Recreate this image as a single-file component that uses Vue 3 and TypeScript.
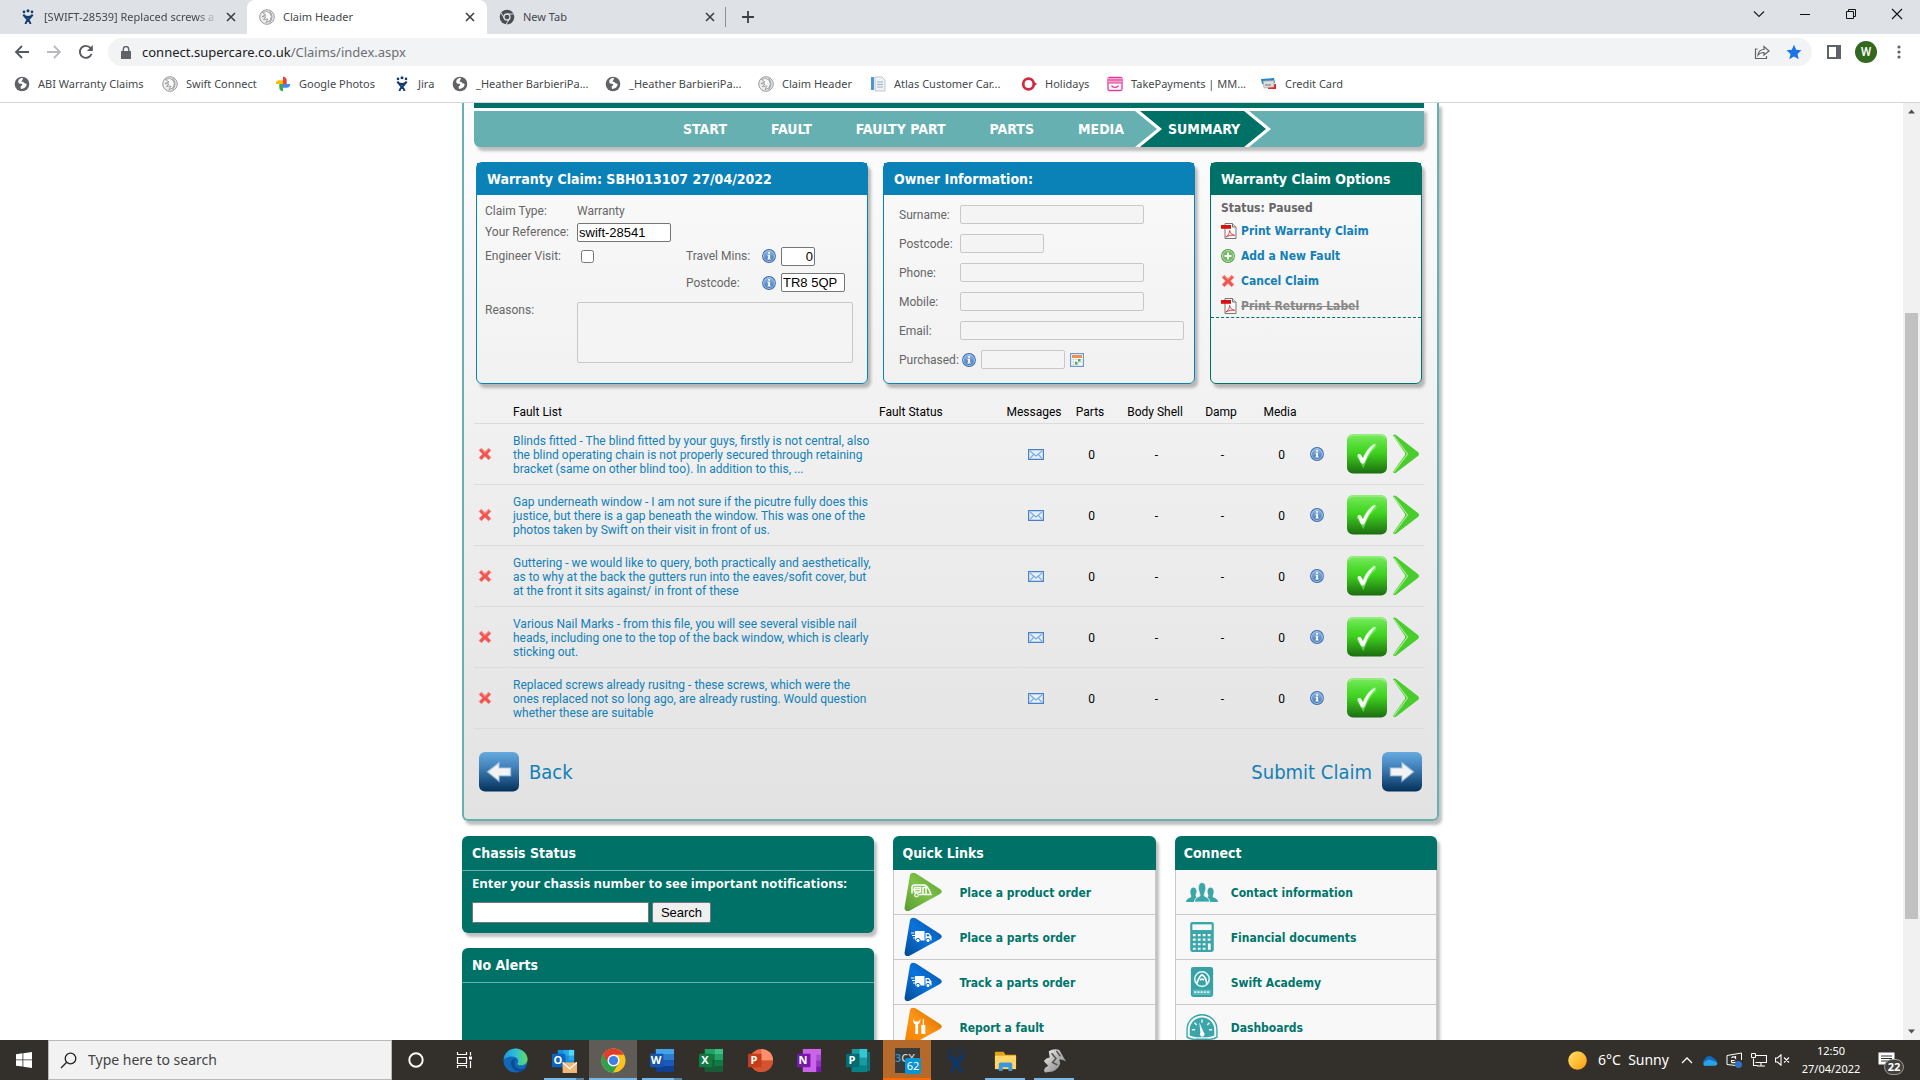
<script setup lang="ts">
interface Bookmark { label: string; icon: string }
interface Fault { id: number; text: string }
interface QuickLink { label: string; icon: string }
interface TaskApp { name: string; icon: string; state: string; letter?: string; badge?: string }

const bookmarks: Bookmark[] = [
  { label: 'ABI Warranty Claims', icon: 'globe' },
  { label: 'Swift Connect', icon: 'swift' },
  { label: 'Google Photos', icon: 'photos' },
  { label: 'Jira', icon: 'jira' },
  { label: '_Heather BarbieriPa...', icon: 'globe' },
  { label: '_Heather BarbieriPa...', icon: 'globe' },
  { label: 'Claim Header', icon: 'swift' },
  { label: 'Atlas Customer Car...', icon: 'atlas' },
  { label: 'Holidays', icon: 'holidays' },
  { label: 'TakePayments | MM...', icon: 'takepay' },
  { label: 'Credit Card', icon: 'card' },
]

const steps = ['START', 'FAULT', 'FAULTY PART', 'PARTS', 'MEDIA', 'SUMMARY']

const faults: Fault[] = [
  { id: 1, text: 'Blinds fitted - The blind fitted by your guys, firstly is not central, also\nthe blind operating chain is not properly secured through retaining\nbracket (same on other blind too). In addition to this, ...' },
  { id: 2, text: 'Gap underneath window - I am not sure if the picutre fully does this\njustice, but there is a gap beneath the window. This was one of the\nphotos taken by Swift on their visit in front of us.' },
  { id: 3, text: 'Guttering - we would like to query, both practically and aesthetically,\nas to why at the back the gutters run into the eaves/sofit cover, but\nat the front it sits against/ in front of these' },
  { id: 4, text: 'Various Nail Marks - from this file, you will see several visible nail\nheads, including one to the top of the back window, which is clearly\nsticking out.' },
  { id: 5, text: 'Replaced screws already rusitng - these screws, which were the\nones replaced not so long ago, are already rusting. Would question\nwhether these are suitable' },
]

const owner = [
  { id: 'surname', label: 'Surname:', size: 'medium' },
  { id: 'owner-postcode', label: 'Postcode:', size: 'short' },
  { id: 'phone', label: 'Phone:', size: 'medium' },
  { id: 'mobile', label: 'Mobile:', size: 'medium' },
  { id: 'email', label: 'Email:', size: 'long' },
]

const quickLinks: QuickLink[] = [
  { label: 'Place a product order', icon: 'caravan' },
  { label: 'Place a parts order', icon: 'truck' },
  { label: 'Track a parts order', icon: 'truck' },
  { label: 'Report a fault', icon: 'tools' },
]
const connectLinks: QuickLink[] = [
  { label: 'Contact information', icon: 'people' },
  { label: 'Financial documents', icon: 'calc' },
  { label: 'Swift Academy', icon: 'academy' },
  { label: 'Dashboards', icon: 'gauge' },
]

const apps: TaskApp[] = [
  { name: 'Edge', icon: 'edge', state: '' },
  { name: 'Outlook', icon: 'outlook', state: 'stacked', letter: 'O' },
  { name: 'Chrome', icon: 'chrome', state: 'active' },
  { name: 'Word', icon: 'word', state: 'stacked', letter: 'W' },
  { name: 'Excel', icon: 'excel', state: '', letter: 'X' },
  { name: 'PowerPoint', icon: 'ppt', state: '', letter: 'P' },
  { name: 'OneNote', icon: 'onenote', state: '', letter: 'N' },
  { name: 'Publisher', icon: 'publisher', state: '', letter: 'P' },
  { name: '3CX', icon: 'cx', state: 'alert', badge: '62' },
  { name: 'Jira', icon: 'jira-lg', state: '' },
  { name: 'File Explorer', icon: 'explorer', state: 'open' },
  { name: 'Swift', icon: 'bird', state: 'open' },
]
</script>

<template>
  <div class="screen">
    <svg class="defs" width="0" height="0" aria-hidden="true">
      <defs>
        <linearGradient id="gGreen" x1="0" y1="0" x2="0" y2="1">
          <stop offset="0" stop-color="#7dea62" /><stop offset=".3" stop-color="#4fdc31" /><stop offset=".48" stop-color="#3fd11f" /><stop offset="1" stop-color="#1c6d10" />
        </linearGradient>
        <linearGradient id="gBlue" x1="0" y1="0" x2="0" y2="1">
          <stop offset="0" stop-color="#66aae0" /><stop offset=".4" stop-color="#3f80b8" /><stop offset="1" stop-color="#04305a" />
        </linearGradient>
        <linearGradient id="gInfo" x1="0" y1="0" x2="0" y2="1">
          <stop offset="0" stop-color="#8fb8e4" /><stop offset="1" stop-color="#4577b4" />
        </linearGradient>
        <linearGradient id="gTriG" x1="0" y1="1" x2="1" y2="0">
          <stop offset="0" stop-color="#5a9a32" /><stop offset=".5" stop-color="#7dc247" /><stop offset="1" stop-color="#5f9e35" />
        </linearGradient>
        <linearGradient id="gTriB" x1="0" y1="1" x2="1" y2="0">
          <stop offset="0" stop-color="#034a94" /><stop offset=".5" stop-color="#0a74dc" /><stop offset="1" stop-color="#034f9f" />
        </linearGradient>
        <linearGradient id="gTriO" x1="0" y1="1" x2="1" y2="0">
          <stop offset="0" stop-color="#f08000" /><stop offset=".5" stop-color="#ff9414" /><stop offset="1" stop-color="#c66a00" />
        </linearGradient>
        <linearGradient id="gSun" x1="0" y1="0" x2="1" y2="1">
          <stop offset="0" stop-color="#ffe36a" /><stop offset="1" stop-color="#ff9a0a" />
        </linearGradient>
        <linearGradient id="gEdge" x1="0" y1="0" x2="1" y2="0">
          <stop offset="0" stop-color="#2196dc" /><stop offset=".5" stop-color="#2ec0d8" /><stop offset="1" stop-color="#62dc5c" />
        </linearGradient>
        <linearGradient id="gMetal" x1="0" y1="0" x2="1" y2="1">
          <stop offset="0" stop-color="#f4f4f4" /><stop offset=".5" stop-color="#b4b4b4" /><stop offset="1" stop-color="#7c7c7c" />
        </linearGradient>
      </defs>

      <symbol id="i-globe" viewBox="0 0 16 16"><circle cx="8" cy="8" r="7.300" fill="#5f6368" /><path d="M8.500 1.800C6 2.200 4.400 3.600 4.200 5.400c-.1 1.600 1 2.300 2.900 2.300 1.600 0 1.400 1.600.4 2-1.200.5-.9 1.900-.4 3.200 2.800-.1 5.100-1.700 5.500-4.100.2-1.200-1-1.400-1.800-1.600-1.100-.2-.8-1.500-2.100-1.500-1.100.1-1.500-.6-.7-1.300.9-.8 1.200-1.700.5-2.600z" fill="#fff" /></symbol>
      <symbol id="i-swift" viewBox="0 0 16 16"><circle cx="8" cy="8" r="7.300" fill="#ececec" stroke="#999" /><path d="M3.500 3.500Q8 1 11 4l1.500 3.500L11 12l-4 1.500 2-3.500-4.500.5 2.500-2.500-4-.5 4-1.500z" fill="#fafafa" stroke="#8f8f8f" stroke-width=".8" /><path d="M10.500 2.500q4.500 5 0 11" fill="none" stroke="#aaa" stroke-width="1.500" /></symbol>
      <symbol id="i-photos" viewBox="0 0 16 16"><path d="M8 8V.8a3.700 3.700 0 0 1 3.700 3.700V8z" fill="#ea4335" /><path d="M8 8h7.200a3.700 3.700 0 0 1-3.700 3.700H8z" fill="#4285f4" /><path d="M8 8v7.200a3.700 3.700 0 0 1-3.700-3.700V8z" fill="#34a853" /><path d="M8 8H.8a3.700 3.700 0 0 1 3.700-3.700H8z" fill="#fbbc04" /></symbol>
      <symbol id="i-jira" viewBox="0 0 16 16"><g fill="#123c6e"><circle cx="8" cy="1.800" r="1.500" /><circle cx="4" cy="2.900" r="1.300" /><circle cx="12" cy="2.900" r="1.300" /></g><path d="M3.500 5.500C4 7.500 6.500 8 8 8s4-.5 4.500-2.500M5 7.500c.5 2.500 5.500 3.500 5.500 7.500M11 7.500c-.5 2.500-5.500 3.500-5.500 7.500" fill="none" stroke="#123c6e" stroke-width="2" /></symbol>
      <symbol id="i-jira-lg" viewBox="0 0 16 16"><g fill="#0b3769"><circle cx="8" cy="1.500" r="1.200" /><circle cx="4" cy="2.400" r="1.200" /><circle cx="12" cy="2.400" r="1.200" /></g><path d="M3.400 4.500C4 6.800 6.500 7.300 8 7.300S12 6.800 12.600 4.500M5 7c.5 3 5.900 4 5.900 8.700M11 7c-.5 3-5.900 4-5.900 8.700" fill="none" stroke="#0b3769" stroke-width="2" /></symbol>
      <symbol id="i-atlas" viewBox="0 0 16 16"><path d="M1 1h3v13H1z" fill="#4b97cf" /><path d="M5 1h7l3 3v11H5z" fill="#eef2f5" stroke="#b4bcc4" stroke-width=".8" /><path d="M7 6h6M7 8.500h6M7 11h6" stroke="#9fb2c4" /></symbol>
      <symbol id="i-holidays" viewBox="0 0 16 16"><circle cx="7.500" cy="8" r="5.300" fill="none" stroke="#d02c3f" stroke-width="2.800" /><path d="M12 5l4 3-4 3z" fill="#d02c3f" /></symbol>
      <symbol id="i-takepay" viewBox="0 0 16 16"><rect x="1" y="1.500" width="14" height="13" rx="1.500" fill="#fff" stroke="#e13b96" stroke-width="1.300" /><path d="M1 2h14v5H1z" fill="#f4a3cd" /><path d="M1 4h14M1 7h14" stroke="#e13b96" /><path d="M4.500 9.500c1 2.500 6 2.500 7 0" fill="none" stroke="#e13b96" stroke-width="1.300" /></symbol>
      <symbol id="i-card" viewBox="0 0 16 16"><path d="M0 3l13-1 1 5-13 1z" fill="#2288c8" /><path d="M7 8h8v5H7z" fill="#e02a2a" /><path d="M2 5l11-.5V11L3 12z" fill="#dcdcdc" stroke="#999" stroke-width=".6" /><path d="M4 9h6" stroke="#777" /></symbol>

      <symbol id="i-info" viewBox="0 0 16 16"><circle cx="8" cy="8" r="7.900" fill="#3a6aae" /><circle cx="8" cy="8" r="6.300" fill="url(#gInfo)" stroke="#b8d2ee" stroke-width=".9" /><path d="M7.100 3.500h2v1.800h-2zM6.300 6.500h2.800v4.300h.9v1.300H6.200v-1.300h.9V7.700h-.8z" fill="#fff" /></symbol>
      <symbol id="i-cross" viewBox="0 0 16 16"><path d="M3.900 1.300 8 5.300l4.100-4 2.600 2.600L10.700 8l4 4.100-2.600 2.600-4.100-4-4.100 4-2.600-2.600 4-4.100-4-4.100z" fill="#f4524f" stroke="#e8746f" stroke-width=".6" /><path d="M3.900 2.200 8 6.300l4.100-4.100" fill="none" stroke="#ff9a96" stroke-width="1.100" /></symbol>
      <symbol id="i-pdf" viewBox="0 0 16 16"><path d="M4 .5h7.500l3.500 3.500v11.500H4z" fill="#fafafa" stroke="#777" /><path d="M11.500.5V4H15" fill="#ddd" stroke="#777" /><path d="M0 2h10v3.800H0z" fill="#d81010" /><path d="M4.800 14c2.300-1.200 3.700-4 3.900-6.500.4 3 2.500 4.500 5 4.800-2.800-.4-6 .2-8.900 1.700z" fill="none" stroke="#d83030" stroke-width=".9" /></symbol>
      <symbol id="i-plus" viewBox="0 0 16 16"><circle cx="8" cy="8" r="7.900" fill="#4e9e44" /><circle cx="8" cy="8" r="6.300" fill="#6db95f" stroke="#c6e8bd" /><path d="M6.900 4h2.200v2.900H12v2.200H9.100V12H6.900V9.100H4V6.900h2.900z" fill="#fff" /></symbol>
      <symbol id="i-mail" viewBox="0 0 16 11"><path d="M.6.600h14.800v9.800H.6z" fill="#e4f0fc" stroke="#4a80c4" stroke-width="1.200" /><path d="M2 2l6 5 6-5M2 9.300l3.600-3.800M14 9.300l-3.600-3.800" fill="none" stroke="#7da9dc" stroke-width="1.100" /></symbol>
      <symbol id="i-cal" viewBox="0 0 14 14"><path d="M.6.600h12.800v12.800H.6z" fill="#fff" stroke="#6b9ad0" stroke-width="1.200" /><path d="M2 2h10v3H2z" fill="#f0904a" /><path d="M2.500 6.500h9M2.500 9h9M2.500 11.500h6" stroke="#b8cce0" stroke-width="1.500" stroke-dasharray="1.600 1" /><path d="M8 6h2.500v2.500H8zM5 9h2.500v2.500H5z" fill="#55ac44" /></symbol>
      <symbol id="i-check" viewBox="0 0 40 40"><rect width="40" height="39.500" rx="6" fill="url(#gGreen)" /><path d="M2 4Q3 1 7 1h26q4 0 5 3" fill="none" stroke="#b3f5a2" stroke-width=".8" /><path d="M12.500 22.500l3.500 6C18.500 22 22 16 27 12" fill="none" stroke="#8dff7a" stroke-opacity=".5" stroke-width="5" stroke-linecap="round" /><path d="M10.600 21q2-2.200 3.500 0l1.800 3.500Q19.500 15.500 26 11q2-1.200 2.500-.3-7 7-10.500 17-1.600 3.400-4.200.8z" fill="#fff" /></symbol>
      <symbol id="i-next" viewBox="0 0 28 40"><path d="M1 1.500Q2 0 4 1l22.500 17.500q1 1.500 0 3L4 38.800q-2.500 1-3-1L13 21v-2z" fill="#4bcc2e" /><path d="M2 2l13.500 18L2 38" fill="none" stroke="#a5f090" stroke-width="1.200" /></symbol>
      <symbol id="i-left" viewBox="0 0 40 40"><rect width="40" height="39.500" rx="6" fill="url(#gBlue)" /><path d="M8.500 19.800 20 10.800v5.200h11.500v7.800H20v5.200z" fill="#f3f3f3" stroke="#b4cce4" stroke-opacity=".6" stroke-width="1.600" /></symbol>
      <symbol id="i-right" viewBox="0 0 40 40"><rect width="40" height="39.500" rx="6" fill="url(#gBlue)" /><path d="M31.500 19.800 20 10.800v5.200H8.500v7.800H20v5.200z" fill="#f3f3f3" stroke="#b4cce4" stroke-opacity=".6" stroke-width="1.600" /></symbol>

      <symbol id="i-caravan" viewBox="0 0 38 40"><path d="M6 3Q7.500-.5 12 1.500L36 17q3.500 2.500 0 5L6 38.500Q1 40.500.5 36z" fill="url(#gTriG)" /><path d="M8 21.500v-6q0-2.500 2.500-2.500h10q3.500 1 6.500 9.500H15M9 17.500h7M10.500 15.500h6v4.500h-6zM19 22.500v-7h3v7" fill="none" stroke="#fff" stroke-width="1.500" /><circle cx="12.500" cy="23" r="1.800" fill="#7dc247" stroke="#fff" stroke-width="1.200" /></symbol>
      <symbol id="i-truck" viewBox="0 0 38 40"><path d="M6 3Q7.500-.5 12 1.500L36 17q3.500 2.500 0 5L6 38.500Q1 40.500.5 36z" fill="url(#gTriB)" /><path d="M11 14h9.500v9.500H11zM21.500 16h3.500l2.500 3.500v4h-6z" fill="#fff" /><path d="M7 16h3.500M8 18.500h3M9 21h2" stroke="#fff" stroke-width="1.200" /><path d="M22.700 17.300h1.800l1.200 2h-3z" fill="#0868c8" /><g fill="#fff" stroke="#0868c8"><circle cx="14" cy="23.500" r="2.100" /><circle cx="24" cy="23.500" r="2.100" /></g></symbol>
      <symbol id="i-tools" viewBox="0 0 38 40"><path d="M6 3Q7.500-.5 12 1.500L36 17q3.500 2.500 0 5L6 38.500Q1 40.500.5 36z" fill="url(#gTriO)" /><path d="M9 12q0 4.500 2.300 5.300v9.700h2.800v-9.700q2.300-1 2.300-5.300l-2 2.500H11zM18.800 12h1v6h1.500v9h-4v-9h1.500z" fill="#fff" /></symbol>
      <symbol id="i-people" viewBox="0 0 32 20"><g fill="#3aa6aa"><path d="M0 20q.3-3.600 4.500-4.600 1.300-.6.600-2-1.600-3.800-.2-6.500 3.300-3 5.400.6.8 3-.6 5.500-.5 1.500.8 2.200L8 20z" /><path d="M32 20q-.3-3.600-4.500-4.600-1.300-.6-.6-2 1.600-3.800.2-6.500-3.300-3-5.400.6-.8 3 .6 5.500.5 1.500-.8 2.200L24 20z" /><path d="M8.500 20q.2-4.200 4.800-5.500 1.200-.7.500-2.500-2.600-5.300-.8-9.700 3-3.600 6.200 0 1.800 4.400-.8 9.700-.7 1.800.5 2.500 4.600 1.300 4.800 5.500z" stroke="#f8f8f8" stroke-width=".8" /></g></symbol>
      <symbol id="i-calc" viewBox="0 0 22 28"><rect width="22" height="28" rx="2" fill="#3aa6aa" /><path d="M2 2.200h18v5.300H2z" fill="#f8f8f8" /><path d="M2.500 12.200h18M2.500 16.500h18M2.500 20.800h12M2.500 25h12" stroke="#f8f8f8" stroke-width="2" stroke-dasharray="2.600 2" /><path d="M16.500 20h2.600v6h-2.600z" fill="#f8f8f8" /></symbol>
      <symbol id="i-academy" viewBox="0 0 23 31"><rect width="23" height="31" rx="2.500" fill="#36a2a6" /><path d="M2 23.500h19v5.500H2z" fill="#5cb8ba" /><circle cx="11.500" cy="12.500" r="7.500" fill="none" stroke="#e6f6f6" stroke-width="1.600" /><path d="M6 17.500q2.500-8 5.500-9.500 4 2 5 9.500M9.500 13.500q2-2 4 0" fill="none" stroke="#fff" stroke-width="1.800" /><path d="M3.500 26h16" stroke="#d9f2f2" stroke-width="1.800" stroke-dasharray="2.200 1.100" /></symbol>
      <symbol id="i-gauge" viewBox="0 0 30 25"><path d="M1 22V15a14 14 0 0 1 28 0v7q-3 2.500-9 2H10q-6 .5-9-2z" fill="#f8f8f8" stroke="#3aa6aa" stroke-width="1.300" /><path d="M3.500 20.500V15a11.500 11.500 0 0 1 23 0v5.500q-5 2-8 1.500h-7q-3 .5-8-1.500z" fill="#3aa6aa" /><path d="M5.500 15h3M21.500 15h3M8 8.500l2 2M22 8.500l-2 2M15 5.500v3" stroke="#e4f5f5" stroke-width="1.400" /><path d="M12.500 8l4 9.500a2.200 2.200 0 1 1-3 .5z" fill="#fff" /></symbol>

      <symbol id="i-edge" viewBox="0 0 26 26"><circle cx="13" cy="13" r="12.500" fill="#1268b8" /><path d="M.6 12C1.500 5 7 .5 13 .5c7 0 12.500 5.500 12.500 11 0 4.500-3.500 6.500-7 6.500-3 0-4-1.300-3.400-2.200 1.500-2.500.5-6.300-4.100-6.800C6 8.500 1.800 10 .6 12z" fill="url(#gEdge)" /><path d="M8.500 14c-1 6 4 10.500 9 10.500 3 0 5.500-2 6.500-4-5 2.500-12 1-12-5 0-2 .8-3.500 2-4-3-.5-5 .8-5.500 2.500z" fill="#0b4c92" /></symbol>
      <symbol id="i-outlook" viewBox="0 0 26 26"><path d="M6 2h17v16H6z" fill="#1490df" /><path d="M12 2h5.500v6H12zM17.500 8H23v5h-5.500z" fill="#28a8ea" /><path d="M17.500 2H23v6h-5.500z" fill="#50d9ff" /><rect y="6" width="14" height="14" rx="1" fill="#0a64c0" /><path d="M11 15h15v11H11z" fill="#f0b878" /><path d="M11 15l7.500 6.500L26 15" fill="none" stroke="#fff" stroke-width="1.200" /></symbol>
      <symbol id="i-chrome" viewBox="0 0 26 26"><circle cx="13" cy="13" r="12.500" fill="#fcc31e" /><path d="M13 13 2.200 6.700A12.500 12.500 0 0 0 12.500 25.500L18.200 16z" fill="#2da14c" /><path d="M7.800 16 2.200 6.700A12.500 12.500 0 0 1 23.800 6.900H13z" fill="#e33b2e" /><circle cx="13" cy="13" r="6.200" fill="#fff" /><circle cx="13" cy="13" r="4.800" fill="#3d7ee8" /></symbol>
      <symbol id="i-word" viewBox="0 0 26 26"><path d="M6 1h19v6H6z" fill="#41a5ee" /><path d="M6 7h19v6H6z" fill="#2b7cd3" /><path d="M6 13h19v6H6z" fill="#185abd" /><path d="M6 19h19v6H6z" fill="#103f91" /><rect y="6" width="14" height="14" rx="1" fill="#1853b0" /></symbol>
      <symbol id="i-excel" viewBox="0 0 26 26"><path d="M6 1h10v6H6z" fill="#21a366" /><path d="M16 1h9v6h-9z" fill="#33c481" /><path d="M6 7h10v6H6z" fill="#107c41" /><path d="M16 7h9v6h-9z" fill="#21a366" /><path d="M6 13h19v12H6z" fill="#185c37" /><path d="M16 13h9v6h-9z" fill="#107c41" /><rect y="6" width="14" height="14" rx="1" fill="#107c41" /></symbol>
      <symbol id="i-ppt" viewBox="0 0 26 26"><circle cx="14" cy="13" r="12" fill="#ed6c47" /><path d="M14 1a12 12 0 0 1 12 12H14z" fill="#ff8f6b" /><path d="M2 13h24a12 12 0 0 1-24 0z" fill="#d35230" /><rect y="6" width="14" height="14" rx="1" fill="#c43e1c" /></symbol>
      <symbol id="i-onenote" viewBox="0 0 26 26"><path d="M6 1h19v24H6z" fill="#ca64ea" /><path d="M20 7h5v6h-5z" fill="#ae4bd5" /><path d="M20 13h5v6h-5z" fill="#9332bf" /><path d="M20 19h5v6h-5z" fill="#7719aa" /><rect y="6" width="14" height="14" rx="1" fill="#7719aa" /></symbol>
      <symbol id="i-publisher" viewBox="0 0 26 26"><path d="M6 1h16v24H6z" fill="#1a9ba1" /><path d="M14 1h8v9h-8z" fill="#37c6d0" /><path d="M22 4h3v20h-3z" fill="#0d7377" /><path d="M6 18h16v7H6z" fill="#058387" /><rect y="6" width="14" height="14" rx="1" fill="#036c70" /></symbol>
      <symbol id="i-cx" viewBox="0 0 26 26"><path d="M0 0h26v26H0z" fill="#3a3a3a" /></symbol>
      <symbol id="i-explorer" viewBox="0 0 26 26"><path d="M2 4h9l2 3h11v6H2z" fill="#e0a21c" /><path d="M2 8h22v14H2z" fill="#ffd667" /><path d="M6 24v-7q0-2 2-2h10q2 0 2 2v7h-4v-4h-6v4z" fill="#3a96dd" /></symbol>
      <symbol id="i-bird" viewBox="0 0 26 26"><path d="M7 3.500Q12 0 18 2l7 12q-4-2.500-7-2l1 4q-2 6-8 8.500l-8 1q-2-3 1-5.500l2.500-1.500q-3-2.500-4.500-5 2-3 6-3.500z" fill="url(#gMetal)" /><path d="M10 5.500l4.500 5.500L11 15l5 2.500M15 3l4 5.500" fill="none" stroke="#55524e" stroke-width="1.600" /></symbol>
    </svg>

    <header class="browser">
      <div class="tabs">
        <div class="tab first">
          <svg class="i16"><use href="#i-jira" /></svg>
          <span class="tab-title fade">[SWIFT-28539] Replaced screws a</span>
          <button class="plain" aria-label="Close tab"><svg width="10" height="10" viewBox="0 0 10 10"><path d="M1 1l8 8M9 1l-8 8" stroke="#3c4043" stroke-width="1.600" /></svg></button>
        </div>
        <div class="tab current">
          <svg class="i16"><use href="#i-swift" /></svg>
          <span class="tab-title">Claim Header</span>
          <button class="plain" aria-label="Close tab"><svg width="10" height="10" viewBox="0 0 10 10"><path d="M1 1l8 8M9 1l-8 8" stroke="#3c4043" stroke-width="1.600" /></svg></button>
        </div>
        <div class="tab last">
          <svg class="i16" viewBox="0 0 16 16"><circle cx="8" cy="8" r="7.300" fill="#4a4d51" /><circle cx="8" cy="8" r="3" fill="#4a4d51" stroke="#dee1e6" stroke-width="1.300" /><path d="M8 5h6.500M5.400 9.500 2.200 4M10.600 9.500 7.400 15" stroke="#dee1e6" /></svg>
          <span class="tab-title">New Tab</span>
          <button class="plain" aria-label="Close tab"><svg width="10" height="10" viewBox="0 0 10 10"><path d="M1 1l8 8M9 1l-8 8" stroke="#3c4043" stroke-width="1.600" /></svg></button>
        </div>
        <button class="plain new-tab" aria-label="New tab"><svg width="14" height="14" viewBox="0 0 14 14"><path d="M7 1v12M1 7h12" stroke="#3c4043" stroke-width="1.800" /></svg></button>
        <div class="window-buttons">
          <button class="plain" aria-label="Search tabs"><svg width="12" height="12" viewBox="0 0 12 12"><path d="M1 3.500l5 5 5-5" fill="none" stroke="#222" stroke-width="1.200" /></svg></button>
          <button class="plain" aria-label="Minimise"><svg width="12" height="12" viewBox="0 0 12 12"><path d="M1 6.500h10" stroke="#111" /></svg></button>
          <button class="plain" aria-label="Restore"><svg width="12" height="12" viewBox="0 0 12 12"><path d="M1.500 3.500h7v7h-7zM3.500 3.500v-2h7v7h-2" fill="none" stroke="#111" /></svg></button>
          <button class="plain" aria-label="Close"><svg width="12" height="12" viewBox="0 0 12 12"><path d="M1 1l10 10M11 1L1 11" stroke="#111" stroke-width="1.100" /></svg></button>
        </div>
      </div>

      <div class="toolbar">
        <div class="nav-buttons">
          <button class="plain" aria-label="Back"><svg width="16" height="16" viewBox="0 0 16 16"><path d="M15 8H2M8 2L2 8l6 6" fill="none" stroke="#55585c" stroke-width="1.800" /></svg></button>
          <button class="plain" aria-label="Forward"><svg width="16" height="16" viewBox="0 0 16 16"><path d="M1 8h13M8 2l6 6-6 6" fill="none" stroke="#b8babd" stroke-width="1.800" /></svg></button>
          <button class="plain" aria-label="Reload"><svg width="16" height="16" viewBox="0 0 16 16"><path d="M13.500 10A6 6 0 1 1 12.500 4L14 5.500" fill="none" stroke="#55585c" stroke-width="1.900" /><path d="M14.800 1v6H9z" fill="#55585c" /></svg></button>
        </div>
        <div class="omnibox">
          <svg width="10" height="13" viewBox="0 0 10 13"><path d="M0 5h10v8H0z" fill="#5f6368" /><path d="M2.300 5V3.200a2.700 2.700 0 0 1 5.400 0V5" fill="none" stroke="#5f6368" stroke-width="1.400" /></svg>
          <a class="url" href="#">connect.supercare.co.uk<span>/Claims/index.aspx</span></a>
          <button class="plain" aria-label="Share"><svg width="16" height="16" viewBox="0 0 16 16"><path d="M3.500 5H1.500v9.500h11V12" fill="none" stroke="#5f6368" stroke-width="1.200" /><path d="M4 11c.5-4 3-5.500 6-5.500V2.500L15 7l-5 4V8.500C7.500 8.500 5.500 9 4 11z" fill="none" stroke="#5f6368" stroke-width="1.200" /></svg></button>
          <button class="plain" aria-label="Bookmarked"><svg width="16" height="16" viewBox="0 0 16 16"><path d="M8 .8l2.200 5 5.300.5-4 3.600 1.200 5.300L8 12.400l-4.700 2.800 1.200-5.300-4-3.600 5.300-.5z" fill="#1a73e8" /></svg></button>
        </div>
        <button class="plain" aria-label="Side panel"><svg width="14" height="14" viewBox="0 0 14 14"><path d="M1 1h12v12H1z" fill="#fff" stroke="#5f6368" stroke-width="2" /><path d="M9 1h4v12H9z" fill="#5f6368" /></svg></button>
        <button class="avatar">W</button>
        <button class="plain menu" aria-label="Menu"><svg width="4" height="14" viewBox="0 0 4 14"><g fill="#5f6368"><circle cx="2" cy="2" r="1.600" /><circle cx="2" cy="7" r="1.600" /><circle cx="2" cy="12" r="1.600" /></g></svg></button>
      </div>

      <nav class="bookmarks">
        <a v-for="(b, i) in bookmarks" :key="i" href="#"><svg class="i16"><use :href="'#i-' + b.icon" /></svg>{{ b.label }}</a>
      </nav>
    </header>

    <div class="viewport">
      <main class="page">
        <section class="claim">
          <div class="bar"></div>
          <ol class="steps">
            <li v-for="s in steps" :key="s">
              <svg v-if="s === 'SUMMARY'" class="arrow" width="136" height="36" viewBox="0 0 136 36"><path d="M0 0h114l22 18-22 18H0l22-18z" fill="#fff" /><path d="M5 0h104l22 18-22 18H5l22-18z" fill="#007167" /></svg>
              <span>{{ s }}</span>
            </li>
          </ol>

          <div class="cards">
            <section class="card blue">
              <h2>Warranty Claim: SBH013107 27/04/2022</h2>
              <div class="claim-form">
                <span>Claim Type:</span><span class="wide">Warranty</span>
                <label for="ref">Your Reference:</label><span class="wide"><input id="ref" class="ref" type="text" value="swift-28541" /></span>
                <label for="visit">Engineer Visit:</label><input id="visit" class="tick" type="checkbox" />
                <label for="mins">Travel Mins:</label><svg class="i14"><use href="#i-info" /></svg><input id="mins" class="mins" type="text" value="0" />
                <label class="third" for="pc">Postcode:</label><svg class="i14"><use href="#i-info" /></svg><input id="pc" class="pc" type="text" value="TR8 5QP" />
                <label class="reasons-label" for="reasons">Reasons:</label><textarea id="reasons" class="wide" disabled></textarea>
              </div>
            </section>

            <section class="card blue">
              <h2>Owner Information:</h2>
              <div class="owner-form">
                <div v-for="f in owner" :key="f.id" class="owner-row"><label :for="f.id">{{ f.label }}</label><input :id="f.id" :class="f.size" type="text" disabled /></div>
                <div class="owner-row purchased"><label for="purchased">Purchased:</label><svg class="i14"><use href="#i-info" /></svg><input id="purchased" class="short" type="text" disabled /><svg class="i14"><use href="#i-cal" /></svg></div>
              </div>
            </section>

            <section class="card green">
              <h2>Warranty Claim Options</h2>
              <div class="options">
                <p>Status: Paused</p>
                <a href="#"><svg class="i16"><use href="#i-pdf" /></svg>Print Warranty Claim</a>
                <a href="#"><svg class="i14"><use href="#i-plus" /></svg>Add a New Fault</a>
                <a href="#"><svg class="i14"><use href="#i-cross" /></svg>Cancel Claim</a>
                <a class="off" href="#"><svg class="i16"><use href="#i-pdf" /></svg><s>Print Returns Label</s></a>
              </div>
            </section>
          </div>

          <table class="faults">
            <colgroup><col class="c-del" /><col class="c-list" /><col class="c-status" /><col class="c-msg" /><col class="c-parts" /><col class="c-body" /><col class="c-damp" /><col class="c-media" /><col class="c-info" /><col class="c-act" /></colgroup>
            <thead>
              <tr><th></th><th class="left">Fault List</th><th class="left">Fault Status</th><th>Messages</th><th>Parts</th><th>Body Shell</th><th>Damp</th><th>Media</th><th></th><th></th></tr>
            </thead>
            <tbody>
              <tr v-for="f in faults" :key="f.id">
                <td class="del"><button class="plain" aria-label="Delete fault"><svg class="i14"><use href="#i-cross" /></svg></button></td>
                <td class="left text"><a href="#">{{ f.text }}</a></td>
                <td></td>
                <td class="msg"><button class="plain" aria-label="Messages"><svg width="16" height="11"><use href="#i-mail" /></svg></button></td>
                <td class="num">0</td><td class="num">-</td><td class="num">-</td><td class="num">0</td>
                <td class="left"><svg class="i14"><use href="#i-info" /></svg></td>
                <td><div class="actions"><button class="plain" aria-label="Complete"><svg width="40" height="40"><use href="#i-check" /></svg></button><button class="plain" aria-label="Open fault"><svg width="28" height="40"><use href="#i-next" /></svg></button></div></td>
              </tr>
            </tbody>
          </table>

          <div class="footer">
            <a href="#"><svg width="40" height="40"><use href="#i-left" /></svg>Back</a>
            <a href="#">Submit Claim<svg width="40" height="40"><use href="#i-right" /></svg></a>
          </div>
        </section>

        <div class="panels">
          <div class="stack">
            <section class="solid">
              <h2>Chassis Status</h2>
              <form class="chassis" @submit.prevent>
                <label for="chassis">Enter your chassis number to see important notifications:</label>
                <div><input id="chassis" type="text" /><button type="submit">Search</button></div>
              </form>
            </section>
            <section class="solid alerts"><h2>No Alerts</h2></section>
          </div>
          <section class="links">
            <h2>Quick Links</h2>
            <a v-for="l in quickLinks" :key="l.label" href="#"><svg width="38" height="40"><use :href="'#i-' + l.icon" /></svg><span>{{ l.label }}</span></a>
          </section>
          <section class="links connect">
            <h2>Connect</h2>
            <a v-for="l in connectLinks" :key="l.label" href="#"><svg width="32" height="30"><use :href="'#i-' + l.icon" /></svg><span>{{ l.label }}</span></a>
          </section>
        </div>
      </main>
      <div class="scrollbar">
        <svg width="17" height="17" viewBox="0 0 17 17"><path d="M5 10.500l3.500-4 3.500 4z" fill="#505050" /></svg>
        <i class="before"></i><i class="thumb"></i><i class="after"></i>
        <svg width="17" height="17" viewBox="0 0 17 17"><path d="M5 6.500l3.500 4 3.500-4z" fill="#505050" /></svg>
      </div>
    </div>

    <footer class="taskbar">
      <button class="plain start" aria-label="Start"><svg width="16" height="16" viewBox="0 0 16 16"><path d="M0 2.200l6.500-.9v6.200H0zM7.300 1.200L16 0v7.500H7.300zM0 8.300h6.500v6.300L0 13.700zM7.300 8.300H16V16l-8.700-1.200z" fill="#fff" /></svg></button>
      <label class="search"><svg width="17" height="17" viewBox="0 0 17 17"><circle cx="10.500" cy="6.500" r="5.300" fill="none" stroke="#222" stroke-width="1.300" /><path d="M6.700 10.300L1 16" stroke="#222" stroke-width="1.300" /></svg><input type="text" placeholder="Type here to search" aria-label="Type here to search" /></label>
      <button class="plain sys" aria-label="Cortana"><svg width="16" height="16" viewBox="0 0 16 16"><circle cx="8" cy="8" r="6.700" fill="none" stroke="#fff" stroke-width="1.900" /></svg></button>
      <button class="plain sys" aria-label="Task view"><svg width="17" height="16" viewBox="0 0 17 16"><path d="M1.500 0v2.500h9V0M1.500 5.500h9v6h-9zM1.500 16v-2.500h9V16M14.500 0v3.500M14.500 9v7" fill="none" stroke="#fff" stroke-width="1.200" /><path d="M13 4.500h3v3h-3z" fill="#fff" /></svg></button>
      <div class="apps">
        <button v-for="a in apps" :key="a.name" class="app" :class="a.state" :aria-label="a.name">
          <svg width="25" height="25"><use :href="'#i-' + a.icon" /></svg>
          <span v-if="a.letter" class="letter">{{ a.letter }}</span>
          <span v-if="a.badge" class="cx"><em>3</em>CX</span>
          <span v-if="a.badge" class="badge">{{ a.badge }}</span>
        </button>
      </div>
      <div class="tray">
        <svg width="19" height="19" viewBox="0 0 19 19"><circle cx="9.500" cy="9.500" r="9.300" fill="url(#gSun)" /></svg>
        <span class="weather">6°C&nbsp; Sunny</span>
        <svg width="12" height="8" viewBox="0 0 12 8"><path d="M1 7l5-5 5 5" fill="none" stroke="#fff" stroke-width="1.300" /></svg>
        <svg width="17" height="11" viewBox="0 0 17 11"><path d="M4 10.500a3.700 3.700 0 0 1 0-6.500 5 5 0 0 1 9-.5 3.800 3.800 0 0 1 .5 7z" fill="#0f6cc0" /><path d="M3 10.800a3.400 3.400 0 0 1 1.500-4.500L8 4.500l7.500 2.600q2.500 2.700-1.500 3.700z" fill="#2ba3ea" /></svg>
        <svg width="17" height="16" viewBox="0 0 17 16"><path d="M10 13.500L1 12.500V3.500L15.500 1v7" fill="none" stroke="#fff" /><path d="M5.500 6c1-1.500 3-1.500 4 0V4M9.500 10c-1 1-3 1-4 0V8.500h3" fill="none" stroke="#fff" stroke-width="1.200" /><circle cx="12.500" cy="12.500" r="3.500" fill="#2d74c8" /></svg>
        <svg width="16" height="14" viewBox="0 0 16 14"><path d="M4.500 2.500h11v7h-11M10 9.500v3.500M6 13h8M2.500 5.500v7h4" fill="none" stroke="#fff" stroke-width="1.100" /><path d="M.5.500h4v4h-4z" fill="#35312c" stroke="#fff" /></svg>
        <svg width="15" height="12" viewBox="0 0 15 12"><path d="M.5 4h2L6 .8v10.400L2.500 8h-2zM9 3.500l5 5M14 3.500l-5 5" fill="none" stroke="#fff" stroke-width="1.100" /></svg>
        <div class="clock"><time>12:50</time><time>27/04/2022</time></div>
        <div class="notice"><svg width="17" height="17" viewBox="0 0 17 17"><path d="M.5.500h16v12h-6l-3.500 4v-4H.5z" fill="#fff" /><path d="M3 4h11M3 6.500h11M3 9h11" stroke="#35312c" /></svg><b>22</b></div>
      </div>
    </footer>
  </div>
</template>

<style>
html, body { margin: 0; height: 100%; }
#app { height: 100%; }
</style>

<style scoped>
* { box-sizing: border-box; }
.screen { height: 100vh; display: flex; flex-direction: column; overflow: hidden; background: #fff; font: 12px/14px Roboto, sans-serif; color: #666; }
.defs { position: absolute; }
svg { display: block; flex: none; }
a { color: inherit; text-decoration: none; }
h2, p, ol { margin: 0; padding: 0; }
.plain { border: 0; padding: 0; background: none; display: flex; align-items: center; justify-content: center; flex: none; }
.i16 { width: 16px; height: 16px; }
.i14 { width: 14px; height: 14px; }

.browser { flex: none; border-bottom: 1px solid #d5d7da; font: 11px/16px "Noto Sans", sans-serif; color: #45484c; }
.tabs { height: 34px; background: #dee1e6; display: flex; }
.tab { width: 240px; padding: 0 12px; display: flex; align-items: center; gap: 8px; }
.tab.first { width: 247px; padding: 0 11px 0 20px; }
.tab.current { background: #fff; border-radius: 8px 8px 0 0; }
.tab.last { position: relative; }
.tab.last::after { content: ""; width: 1px; height: 20px; background: #8b8e92; position: absolute; right: 1px; top: 7px; }
.tab-title { flex: 1; white-space: nowrap; }
.fade { -webkit-mask-image: linear-gradient(to right, #000 88%, transparent); mask-image: linear-gradient(to right, #000 88%, transparent); }
.new-tab { width: 42px; }
.window-buttons { margin-left: auto; display: flex; height: 28px; }
.window-buttons .plain { width: 46px; }
.toolbar { height: 36px; padding: 0 12px 0 14px; display: flex; align-items: center; }
.nav-buttons { display: flex; gap: 16px; width: 94px; }
.omnibox { flex: 1; height: 28px; border-radius: 14px; background: #f1f3f4; display: flex; align-items: center; gap: 16px; padding: 0 10px 0 13px; margin-right: 15px; }
.url { flex: 1; margin-left: -5px; font-size: 13px; color: #202124; }
.url span { color: #6b6f74; }
.avatar { width: 22px; height: 22px; margin: 0 20px 0 14px; padding: 0; border: 0; border-radius: 50%; background: #33691e; color: #fff; font: 500 12px/22px Roboto, sans-serif; }
.menu { width: 4px; margin-right: 7px; }
.bookmarks { height: 32px; padding: 0 0 4px 14px; display: grid; grid-template-columns: 148px 113px 119px 58px 153px 153px 112px 151px 86px 154px auto; align-items: center; justify-content: start; }
.bookmarks a { display: flex; align-items: center; gap: 8px; white-space: nowrap; }

.viewport { flex: 1; min-height: 0; display: flex; overflow: hidden; }
.page { flex: 1; min-width: 0; overflow: hidden; padding-right: 2px; }
.claim { max-width: 977px; margin: 0 auto; border: 2px solid #66b0b1; border-top: 0; border-radius: 0 0 6px 6px; padding: 0 13px 27px 10px; background: linear-gradient(#fdfdfd, #e2e2e2); box-shadow: 3px 4px 3px rgba(0, 0, 0, .25); }
.bar { height: 5px; background: #007167; }
.steps { list-style: none; height: 39px; border-top: 3px solid #fff; border-radius: 0 0 6px 6px; background: #66b0b1; background-clip: padding-box; box-shadow: 3px 4px 3px rgba(0, 0, 0, .25); padding-left: 187px; display: flex; font: 700 14px/36px "DejaVu Sans Condensed", "DejaVu Sans", sans-serif; color: #fff; }
.steps li { padding: 0 22px; position: relative; }
.steps span { position: relative; }
.arrow { position: absolute; top: 0; left: -11px; }

.cards { display: grid; grid-template-columns: 392fr 312fr 212fr; gap: 15px; margin: 15px 2px 0; }
.card { height: 222px; border: 1px solid; border-radius: 6px; box-shadow: 3px 4px 3px rgba(0, 0, 0, .25); background: linear-gradient(#fafafa, #f1f1f1); }
.card h2, .solid h2, .links h2 { font: 700 14px/32px "DejaVu Sans Condensed", "DejaVu Sans", sans-serif; color: #fff; padding: 0 10px; }
.card.blue { border-color: #0a82b8; }
.card.blue h2 { background: #0a82b8; }
.card.green { border-color: #007167; }
.card.green h2 { background: #007167; }
.card input[type="text"], textarea { border: 1px solid #767676; border-radius: 2px; height: 19px; padding: 0 1px; background: #fff; color: #000; font: 13px/15px "Liberation Sans", sans-serif; }
.card input[type="text"]:disabled, textarea:disabled { border-color: #c8c8c8; background: #f4f4f4; }
.claim-form { padding: 7px 0 0 8px; display: grid; grid-template-columns: 92px 109px 76px 19px auto; grid-template-rows: 18px 24px 24px 29px auto; align-items: center; justify-content: start; }
.wide { grid-column: 2 / -1; }
.third { grid-column: 3; }
.ref { width: 94px; display: block; }
.tick { width: 13px; height: 13px; margin: 0 4px; }
.card .mins { width: 34px; text-align: right; padding-right: 2px; }
.card .pc { width: 64px; }
textarea { width: 276px; resize: none; margin-top: 5px; }
textarea.wide { height: 61px; }
.reasons-label { align-self: start; padding-top: 6px; }
.owner-form { padding: 5px 0 0 15px; }
.owner-row { height: 29px; display: flex; align-items: center; gap: 5px; }
.owner-row label { width: 56px; }
.owner-row.purchased label { width: 58px; }
.medium { width: 184px; }
.short { width: 84px; }
.long { width: 224px; }
.options { height: 123px; border-bottom: 1px dashed #007167; padding: 6px 0 0 10px; font: 700 12px/14px "DejaVu Sans Condensed", "DejaVu Sans", sans-serif; color: #1380b7; }
.options p { color: #666; padding-bottom: 3px; }
.options a { display: grid; grid-template-columns: 20px auto; height: 25px; align-items: center; justify-content: start; }
.options .off { color: #888; }

.faults { width: 100%; margin-top: 16px; border-collapse: collapse; table-layout: fixed; color: #000; }
.faults th { font-weight: 400; height: 23px; padding: 1px 0 0; text-align: center; white-space: nowrap; }
.faults tr { border-bottom: 1px solid #dcdcdc; }
.faults td { height: 61px; padding: 0; text-align: center; }
.faults .left { text-align: left; }
.faults .text { padding-top: 2px; }
.faults td a { color: #1380b7; white-space: pre-line; display: block; }
.faults .plain { display: inline-flex; vertical-align: middle; }
.faults .del { text-align: left; padding-left: 4px; }
.faults .num { padding: 2px 0 0 3px; }
.faults .msg { padding-left: 4px; }
.c-del { width: 39px; } .c-list { width: 366px; } .c-status { width: 127px; } .c-msg { width: 56px; } .c-parts { width: 56px; }
.c-body { width: 74px; } .c-damp { width: 58px; } .c-media { width: 60px; } .c-info { width: 37px; } .c-act { width: 77px; }
.actions { display: flex; gap: 5px; }

.footer { display: flex; justify-content: space-between; padding: 23px 2px 0 5px; font: 20px/40px "DejaVu Sans Condensed", "DejaVu Sans", sans-serif; color: #1380b7; }
.footer a { display: flex; gap: 10px; }

.panels { max-width: 977px; margin: 15px auto 0; padding-right: 2px; display: grid; grid-template-columns: 412fr 262fr 262fr; gap: 19px; }
.solid, .links { border-radius: 6px; box-shadow: 3px 4px 3px rgba(0, 0, 0, .25); }
.solid { background: #007167; color: #fff; }
.solid h2 { line-height: 34px; border-bottom: 1px solid #66b0b1; }
.links h2 { line-height: 34px; background: #007167; border-radius: 6px 6px 0 0; padding: 0 9px; }
.alerts { margin-top: 15px; height: 200px; }
.chassis { height: 62px; padding: 2px 10px 0; font: 700 13px/20px "Open Sans", sans-serif; }
.chassis div { display: flex; gap: 3px; margin-top: 9px; }
.chassis input { width: 177px; height: 21px; border: 1px solid #767676; background: #fff; padding: 0 2px; }
.chassis button { width: 59px; height: 21px; border: 1px solid #767676; border-radius: 2px; background: #efefef; color: #000; padding: 0; font: 13px/17px "Liberation Sans", sans-serif; }
.links { background: #f8f8f8; }
.links a { height: 45px; border: 1px solid #c8c8c8; border-top: 0; display: flex; align-items: center; gap: 17px; padding-left: 10px; font: 700 12px/16px "DejaVu Sans Condensed", "DejaVu Sans", sans-serif; color: #00756b; }
.links span { padding-top: 2px; }
.connect a { gap: 13px; }

.scrollbar { width: 17px; background: #f1f1f1; display: flex; flex-direction: column; align-items: center; flex: none; }
.before { flex: 193; }
.thumb { flex: 606; width: 13px; background: #c1c1c1; }
.after { flex: 104; }

.taskbar { height: 40px; flex: none; background: #332f2a; display: flex; color: #fff; font: 12px/18px "Noto Sans", sans-serif; }
.start { width: 48px; }
.search { width: 344px; background: #f2f2f2; border: 1px solid #b8b8b8; display: flex; align-items: center; gap: 11px; padding-left: 11px; }
.search input { border: 0; padding: 0; background: none; flex: 1; min-width: 0; font: 14px/20px "Noto Sans", sans-serif; }
.search input::placeholder { color: #444; }
.sys { width: 48px; }
.apps { display: flex; gap: 1px; margin-left: 3px; }
.app { width: 48px; border: 0; padding: 0; background: none; display: flex; align-items: center; justify-content: center; position: relative; color: #fff; }
.app.active { background: #5f5c58; border-bottom: 2px solid #76b9ed; padding-top: 2px; }
.app.alert { background: #b56a2c; border-bottom: 2px solid #ff6a00; padding-top: 2px; }
.app.open::after, .app.stacked::after { content: ""; position: absolute; left: 4px; right: 4px; bottom: 0; height: 2px; background: #76b9ed; }
.app.stacked::after { background: linear-gradient(to right, #76b9ed 80%, #5682a4 80%); }
.letter { position: absolute; left: 11px; top: 13px; width: 14px; font: 700 11px/14px "Open Sans", sans-serif; text-align: center; }
.cx { position: absolute; left: 12px; top: 11px; font: 600 11px/14px "Open Sans", sans-serif; color: #ccc; }
.cx em { font-style: normal; color: #2b9bd8; }
.badge { position: absolute; left: 22px; top: 18px; width: 16px; height: 16px; border-radius: 2px; background: #0a95d6; font: 11px/16px "Noto Sans", sans-serif; text-align: center; }
.tray { margin-left: auto; display: flex; align-items: center; padding-right: 16px; }
.weather { font: 14px/20px "Noto Sans", sans-serif; margin: 0 15px 0 11px; width: 68px; white-space: nowrap; }
.tray > svg + svg { margin-left: 8px; }
.clock { display: flex; flex-direction: column; align-items: center; font-size: 11px; margin: 0 17px 0 11px; width: 60px; }
.notice { position: relative; width: 26px; height: 17px; }
.notice b { position: absolute; left: 6px; top: 7px; width: 20px; height: 16px; border: 1px solid #9a9a9a; border-radius: 8px; background: #45413d; font: 700 11px/14px "Noto Sans", sans-serif; text-align: center; }
</style>
